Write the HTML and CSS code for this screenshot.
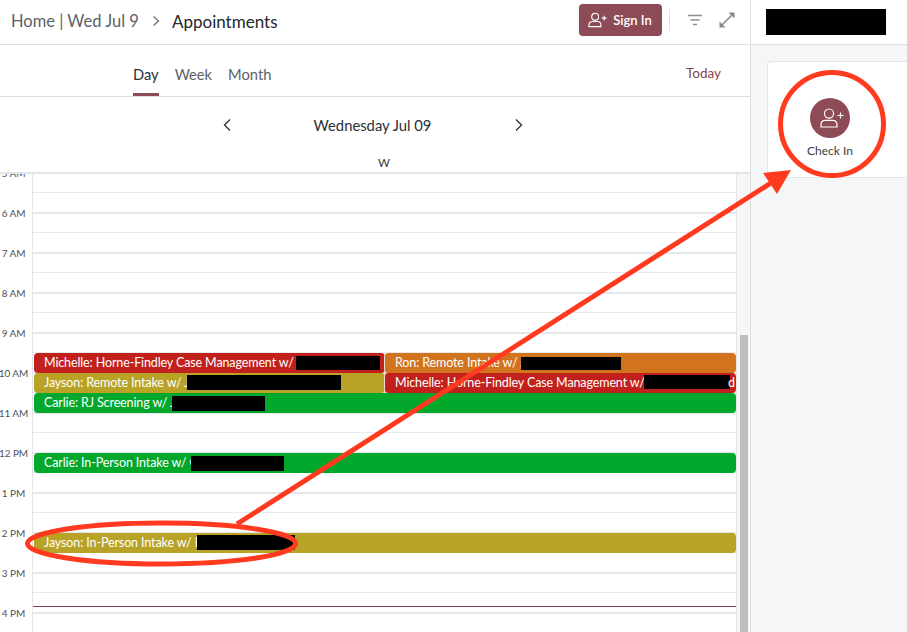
FILE: index.html
```html
<!DOCTYPE html>
<html lang="en">
<head>
<meta charset="utf-8">
<title>Appointments</title>
<link rel="stylesheet" href="styles.css">
</head>
<body>
<div class="app">
  <main class="main">
    <header class="topbar">
      <nav class="crumbs">
        <span class="crumb-home">Home | Wed Jul 9</span>
        <svg class="crumb-sep" width="10" height="12" viewBox="0 0 10 12"><path d="M2.500 1.500 7.500 6 2.500 10.500" fill="none" stroke="#6b7078" stroke-width="1.300"/></svg>
        <span class="crumb-current">Appointments</span>
      </nav>
      <div class="actions">
        <button class="signin">
          <svg width="19" height="16" viewBox="0 0 20 16"><g fill="none" stroke="#fff" stroke-width="1.200"><circle cx="7.500" cy="4.500" r="3.600"/><path d="M1 15v-1.600C1 11 3 9.600 5 9.600h5c2 0 3.600 1.400 3.600 3.800V15z"/><path d="M14.500 6h5M17 3.500v5"/></g></svg>
          <span>Sign In</span>
        </button>
        <span class="divider"></span>
        <svg class="icon-filter" width="16" height="12" viewBox="0 0 16 12"><path d="M1 1.500h14M3.500 6h9M6 10.500h4" stroke="#8a8d92" stroke-width="1.400" fill="none"/></svg>
        <svg class="icon-expand" width="18" height="18" viewBox="0 0 18 18"><path d="M3 15 15 3" stroke="#85888c" stroke-width="1.600"/><path d="M10.500 1.500h6v6zM1.500 10.500v6h6z" fill="#85888c"/></svg>
      </div>
    </header>
    <div class="tabs">
      <div class="tablist">
        <span class="tab active">Day</span>
        <span class="tab">Week</span>
        <span class="tab">Month</span>
      </div>
      <span class="today">Today</span>
    </div>
    <div class="datebar">
      <svg width="10" height="14" viewBox="0 0 10 14"><path d="M8 1.500 2.500 7 8 12.500" fill="none" stroke="#33373d" stroke-width="1.400"/></svg>
      <span class="date-title">Wednesday Jul 09</span>
      <svg width="10" height="14" viewBox="0 0 10 14"><path d="M2 1.500 7.500 7 2 12.500" fill="none" stroke="#33373d" stroke-width="1.400"/></svg>
    </div>
    <div class="weekday">W</div>
    <div class="scroller">
      <div class="calendar">
        <div class="times">
          <div class="time">5 AM</div><div class="time">6 AM</div><div class="time">7 AM</div><div class="time">8 AM</div>
          <div class="time">9 AM</div><div class="time">10 AM</div><div class="time">11 AM</div><div class="time">12 PM</div>
          <div class="time">1 PM</div><div class="time">2 PM</div><div class="time">3 PM</div><div class="time">4 PM</div>
        </div>
        <div class="lane">
          <div class="slot"></div><div class="slot"></div><div class="slot"></div><div class="slot"></div><div class="slot"></div><div class="slot"></div>
          <div class="slot"></div><div class="slot"></div><div class="slot"></div><div class="slot"></div><div class="slot"></div><div class="slot"></div>
          <div class="slot"></div><div class="slot"></div><div class="slot"></div><div class="slot"></div><div class="slot"></div><div class="slot"></div>
          <div class="slot"></div><div class="slot"></div><div class="slot"></div><div class="slot"></div><div class="slot"></div>
          <div class="event ev-a red half-l">Michelle: Horne-Findley Case Management w/ J<i class="redact r-a"></i></div>
          <div class="event ev-a orange half-r">Ron: Remote Intake w/ J<i class="redact r-b"></i></div>
          <div class="event ev-b gold half-l">Jayson: Remote Intake w/ J<i class="redact r-c"></i></div>
          <div class="event ev-b red half-r">Michelle: Horne-Findley Case Management w/ J<i class="redact r-d"></i><b class="tail">d</b></div>
          <div class="event ev-c green full">Carlie: RJ Screening w/ J<i class="redact r-e"></i></div>
          <div class="event ev-d green full">Carlie: In-Person Intake w/ C<i class="redact r-f"></i></div>
          <div class="event ev-e gold full">Jayson: In-Person Intake w/ B<i class="redact r-g"></i></div>
          <div class="nowline"></div>
        </div>
      </div>
      <div class="scrolltrack"><div class="thumb"></div></div>
    </div>
  </main>
  <aside class="side">
    <div class="side-head"><i class="side-redact"></i></div>
    <div class="side-body">
      <div class="card">
        <div class="action">
          <span class="action-icon">
            <svg width="24" height="20" viewBox="0 0 24 20"><g fill="none" stroke="#fff" stroke-width="1.200"><circle cx="9" cy="5.600" r="4.600"/><path d="M1 19v-2.400C1 14 3 12.400 5.500 12.400h7c2.500 0 4.500 1.600 4.500 4.200V19z"/><path d="M17.500 7.500h6M20.500 4.500v6"/></g></svg>
          </span>
          <span class="action-label">Check In</span>
        </div>
      </div>
    </div>
  </aside>
</div>
<svg class="markup" width="907" height="632" viewBox="0 0 907 632">
  <g fill="none" stroke="#ff3a1f" stroke-width="5">
    <circle cx="832" cy="124" r="51.500"/>
    <ellipse cx="161.500" cy="543.500" rx="134" ry="20.500"/>
    <path d="M237 524 774 181"/>
  </g>
  <path d="M791 170 763 173 777 194z" fill="#ff3a1f"/>
</svg>
</body>
</html>
```
FILE: styles.css
```css
* { box-sizing: border-box; }
html, body { margin: 0; height: 100%; overflow: hidden; background: #fff; }
body { font-family: "Lato", "Noto Sans", sans-serif; color: #2b2f36; position: relative; }
.app { display: flex; width: 907px; height: 632px; }
.main { width: 751px; height: 632px; border-right: 1px solid #dcdee2; display: flex; flex-direction: column; flex: none; }
.topbar { height: 45px; flex: none; border-bottom: 1px solid #dcdee2; display: flex; align-items: center; justify-content: space-between; padding: 0 14px 4px 11px; }
.crumbs { display: flex; align-items: center; font-size: 16.500px; padding-top: 2px; }
.crumb-home { color: #5d6168; width: 129px; white-space: nowrap; }
.crumb-sep { margin: 0 11px 0 11px; }
.crumb-current { color: #24272d; font-size: 17px; }
.actions { display: flex; align-items: center; }
.signin { width: 83px; height: 32px; background: #8d4a57; border: 0; border-radius: 4px; color: #fff; display: flex; align-items: center; justify-content: center; gap: 6px; font: 600 13px "Lato", sans-serif; padding: 0 1px 0 0; }
.divider { width: 1px; height: 22px; background: #dcdee2; margin: 0 17px 0 7px; }
.icon-filter { margin-right: 15px; }
.tabs { height: 52px; flex: none; border-bottom: 1px solid #dcdee2; display: flex; justify-content: space-between; padding: 0 29px 0 133px; }
.tablist { display: flex; gap: 16px; }
.tab { font-size: 14.700px; color: #5d6168; height: 51px; padding-top: 20px; }
.tab.active { color: #2b2f36; border-bottom: 3px solid #8d4a57; }
.today { font-size: 13.500px; color: #7f4753; padding-top: 20px; }
.datebar { height: 50px; flex: none; display: flex; align-items: center; justify-content: center; gap: 82px; padding: 6px 5px 0 0; }
.date-title { font-size: 14.800px; color: #2b2f36; width: 118px; white-space: nowrap; text-align: center; }
.weekday { height: 27px; flex: none; border-bottom: 2px solid #e3e4e8; text-align: center; font-size: 11.500px; color: #33373d; padding: 9px 0 0 18px; }
.scroller { flex: 1; min-height: 0; display: flex; overflow: hidden; }
.calendar { width: 737px; flex: none; display: flex; overflow: hidden; }
.times { width: 32px; flex: none; margin-top: -21px; }
.time { height: 40px; display: flex; align-items: center; justify-content: center; font-size: 10px; letter-spacing: -0.1px; color: #4d5158; width: 27px; white-space: nowrap; }
.lane { flex: 1; position: relative; border-left: 1px solid #e3e4e8; border-right: 1px solid #e3e4e8; }
.slot { height: 21px; border-bottom: 2px solid #e6e7eb; }
.slot:nth-child(odd) { height: 19px; border-bottom: 1px solid #e9eaed; }
.event { position: absolute; height: 20px; border-radius: 4px; color: #fff; font-size: 12.500px; letter-spacing: -0.12px; line-height: 20px; padding-left: 10px; white-space: nowrap; overflow: hidden; }
.red { background: #c2201c; }
.orange { background: #d2731e; }
.gold { background: #b8a326; }
.green { background: #02a82b; }
.half-l { left: 1px; width: 351px; }
.half-r { left: 351px; right: 0; border-left: 1px solid #eadfd8; padding-left: 10px; }
.full { left: 1px; right: 0; }
.ev-a { top: 179px; }
.ev-b { top: 199px; }
.ev-c { top: 219px; }
.ev-d { top: 279px; }
.ev-e { top: 359px; }
.redact { position: absolute; background: #000; }
.r-a { left: 262px; width: 84px; top: 3px; height: 14px; }
.r-b { left: 136px; width: 100px; top: 4px; height: 13px; }
.r-c { left: 153px; width: 154px; top: 2px; height: 15px; }
.r-d { left: 259px; width: 86px; top: 2px; height: 14px; }
.r-e { left: 138px; width: 93px; top: 3px; height: 15px; }
.r-f { left: 157px; width: 93px; top: 3px; height: 15px; }
.r-g { left: 163px; width: 98px; top: 2px; height: 15px; }
.tail { position: absolute; right: 1px; top: 0; font-weight: 400; }
.nowline { position: absolute; left: 0; right: 0; top: 432px; height: 1px; background: #8b4049; }
.scrolltrack { flex: 1; background: #f6f6f7; position: relative; padding-left: 3px; }
.thumb { width: 8px; height: 297px; margin-top: 161px; background: #bdbdbd; }
.side { flex: 1; display: flex; flex-direction: column; min-width: 0; }
.side-head { height: 45px; flex: none; border-bottom: 1px solid #dcdee2; background: #fff; padding: 9px 0 0 15px; }
.side-redact { display: block; width: 120px; height: 26px; background: #000; }
.side-body { flex: 1; background: #f5f6f8; padding: 16px 0 0 16px; }
.card { height: 117px; background: #fff; border: 1px solid #e3e5e9; border-right: 0; border-radius: 4px 0 0 4px; padding: 36px 0 0 38px; }
.action { width: 48px; display: flex; flex-direction: column; align-items: center; gap: 5px; }
.action-icon { width: 40px; height: 40px; border-radius: 50%; background: #8d4a57; display: flex; align-items: center; justify-content: center; padding-left: 3px; }
.action-label { font-size: 12px; color: #3a3e45; white-space: nowrap; }
.markup { position: absolute; left: 0; top: 0; pointer-events: none; }
```
